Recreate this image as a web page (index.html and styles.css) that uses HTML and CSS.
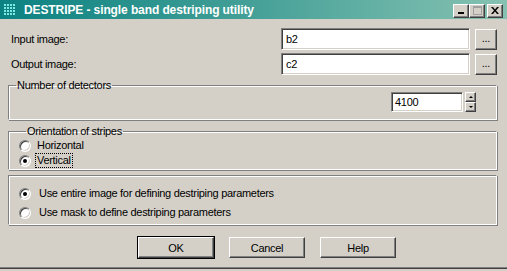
FILE: index.html
```html
<!DOCTYPE html>
<html lang="en">
<head>
    <meta charset="UTF-8">
    <title>DESTRIPE - single band destriping utility</title>
    <link rel="stylesheet" href="styles.css">
</head>
<body>
    <div class="window">
        <div class="titlebar">
            <svg class="app-icon" width="14" height="14" viewBox="0 0 14 14">
                <g fill="#7fe8e0">
                    <rect x="1" y="1" width="2" height="2"/><rect x="4" y="1" width="2" height="2"/><rect x="7" y="1" width="2" height="2"/><rect x="10" y="1" width="2" height="2"/>
                    <rect x="1" y="4" width="2" height="2"/><rect x="4" y="4" width="2" height="2"/><rect x="7" y="4" width="2" height="2"/><rect x="10" y="4" width="2" height="2"/>
                    <rect x="1" y="7" width="2" height="2"/><rect x="4" y="7" width="2" height="2"/><rect x="7" y="7" width="2" height="2"/><rect x="10" y="7" width="2" height="2"/>
                    <rect x="1" y="10" width="2" height="2"/><rect x="4" y="10" width="2" height="2"/><rect x="7" y="10" width="2" height="2"/><rect x="10" y="10" width="2" height="2"/>
                </g>
            </svg>
            <span class="title">DESTRIPE - single band destriping utility</span>
            <div class="caption-buttons">
                <span class="cap-btn">
                    <svg width="8" height="7" viewBox="0 0 8 7"><rect x="1" y="5" width="6" height="2" fill="#000"/></svg>
                </span>
                <span class="cap-btn disabled">
                    <svg width="9" height="9" viewBox="0 0 9 9"><rect x="0.5" y="0.5" width="8" height="8" fill="none" stroke="#a0a0a0"/><rect x="0" y="0" width="9" height="2" fill="#a0a0a0"/></svg>
                </span>
                <span class="cap-btn close">
                    <svg width="8" height="7" viewBox="0 0 8 7"><path d="M0 0h2l2 2.5 2-2.5h2l-3 3.5 3 3.5h-2l-2-2.5-2 2.5h-2l3-3.5z" fill="#000"/></svg>
                </span>
            </div>
        </div>

        <div class="content">
            <div class="file-row">
                <span class="label">Input image:</span>
                <span class="field">b2</span>
                <span class="btn browse">...</span>
            </div>
            <div class="file-row">
                <span class="label">Output image:</span>
                <span class="field">c2</span>
                <span class="btn browse">...</span>
            </div>

            <fieldset class="group detectors">
                <legend>Number of detectors</legend>
                <div class="spinner">
                    <span class="field spin-field">4100</span>
                    <span class="spin-buttons">
                        <span class="btn spin-btn"><span class="arrow up"></span></span>
                        <span class="btn spin-btn"><span class="arrow down"></span></span>
                    </span>
                </div>
            </fieldset>

            <fieldset class="group orientation">
                <legend>Orientation of stripes</legend>
                <div class="radio-row"><span class="radio"></span><span class="radio-label">Horizontal</span></div>
                <div class="radio-row"><span class="radio checked"></span><span class="radio-label focused">Vertical</span></div>
            </fieldset>

            <div class="group mode">
                <div class="radio-row"><span class="radio checked"></span><span class="radio-label">Use entire image for defining destriping parameters</span></div>
                <div class="radio-row"><span class="radio"></span><span class="radio-label">Use mask to define destriping parameters</span></div>
            </div>

            <div class="actions">
                <span class="btn push default">OK</span>
                <span class="btn push">Cancel</span>
                <span class="btn push">Help</span>
            </div>
        </div>
    </div>
</body>
</html>
```

FILE: styles.css
```css
body {
    margin: 0;
    background: #d4d0c8;
    font-family: "Liberation Sans", Arial, sans-serif;
    font-size: 11px;
    letter-spacing: -0.3px;
    color: #000;
}
.window {
    height: 268px;
    border-bottom: 1px solid #404040;
    box-shadow: inset 0 -1px #808080;
}
.titlebar {
    height: 19px;
    display: flex;
    align-items: center;
    background: linear-gradient(to right, #0b8282, #3f9d95 45%, #86c2b2);
    color: #fff;
    padding: 0 4px 0 3px;
}
.app-icon {
    flex: none;
    margin-right: 7px;
}
.title {
    font-weight: bold;
    font-size: 12px;
    letter-spacing: -0.1px;
    flex: 1;
}
.caption-buttons {
    display: flex;
    margin-top: 2px;
}
.cap-btn {
    width: 14px;
    height: 12px;
    display: flex;
    align-items: center;
    justify-content: center;
    background: #d4d0c8;
    border-top: 1px solid #fff;
    border-left: 1px solid #fff;
    border-right: 1px solid #404040;
    border-bottom: 1px solid #404040;
    box-shadow: inset -1px -1px #808080;
}
.cap-btn.close {
    margin-left: 2px;
}
.content {
    padding: 9px 10px 0 8px;
}
.file-row {
    display: flex;
    align-items: center;
    height: 22px;
    margin-bottom: 3px;
}
.label {
    padding-left: 3px;
    flex: 1;
}
.field {
    display: flex;
    align-items: center;
    box-sizing: border-box;
    background: #fff;
    border-top: 1px solid #808080;
    border-left: 1px solid #808080;
    border-right: 1px solid #fff;
    border-bottom: 1px solid #fff;
    box-shadow: inset 1px 1px #404040, inset -1px -1px #d4d0c8;
    padding-left: 4px;
}
.file-row .field {
    width: 189px;
    height: 22px;
}
.btn {
    display: flex;
    align-items: center;
    justify-content: center;
    box-sizing: border-box;
    background: #d4d0c8;
    border-top: 1px solid #fff;
    border-left: 1px solid #fff;
    border-right: 1px solid #404040;
    border-bottom: 1px solid #404040;
    box-shadow: inset -1px -1px #808080;
}
.browse {
    width: 22px;
    height: 21px;
    margin-left: 5px;
    padding-bottom: 3px;
}
.group {
    margin: 0;
    padding: 0;
    min-width: 0;
    border: 1px solid #808080;
    border-right-color: #fff;
    border-bottom-color: #fff;
    box-shadow: inset 1px 1px #fff, 1px 1px #808080;
    width: 489px;
    box-sizing: border-box;
}
.group legend {
    padding: 0 1px;
    margin-left: 7px;
    line-height: 13px;
}
.detectors {
    margin-top: 4px;
    padding: 0 20px 7px 0;
}
.spinner {
    display: flex;
    justify-content: flex-end;
}
.spin-field {
    width: 72px;
    height: 20px;
    padding-left: 3px;
}
.spin-buttons {
    display: flex;
    flex-direction: column;
    margin-left: 2px;
}
.spin-btn {
    width: 11px;
    height: 10px;
}
.arrow {
    width: 0;
    height: 0;
    border-left: 2px solid transparent;
    border-right: 2px solid transparent;
}
.arrow.up {
    border-bottom: 2px solid #000;
}
.arrow.down {
    border-top: 2px solid #000;
}
.orientation {
    margin-top: 5px;
    padding: 0 0 1px 10px;
}
.radio-row {
    display: flex;
    align-items: center;
    height: 15px;
}
.radio {
    flex: none;
    position: relative;
    width: 12px;
    height: 12px;
    box-sizing: border-box;
    border-radius: 50%;
    background: #fff;
    border: 1px solid;
    border-color: #808080 #fff #fff #808080;
    box-shadow: inset 1px 1px #404040, inset -1px -1px #d4d0c8;
}
.radio.checked::after {
    content: "";
    position: absolute;
    left: 3px;
    top: 3px;
    width: 4px;
    height: 4px;
    border-radius: 50%;
    background: #000;
}
.radio-label {
    margin-left: 5px;
    padding: 0 1px;
    line-height: 13px;
}
.radio-label.focused {
    outline: 1px dotted #000;
}
.mode {
    margin-top: 5px;
    padding: 9px 0 3px 10px;
}
.mode .radio-row {
    height: 17px;
    margin-bottom: 2px;
}
.mode .radio-row:last-child {
    margin-bottom: 0;
}
.mode .radio-label {
    margin-left: 7px;
}
.actions {
    display: flex;
    gap: 15px;
    padding-left: 130px;
    margin-top: 12px;
}
.push {
    width: 76px;
    height: 21px;
}
.push.default {
    outline: 1px solid #000;
}
```
